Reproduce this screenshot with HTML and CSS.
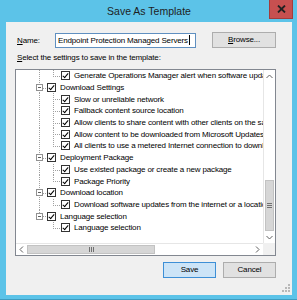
FILE: index.html
```html
<!DOCTYPE html>
<html lang="en">
<head>
    <meta charset="UTF-8">
    <title>Save As Template</title>
    <link rel="stylesheet" href="styles.css">
</head>
<body>
    <div class="window">
        <div class="titlebar">
            <span></span>
            <div class="title">Save As Template</div>
            <div class="close"><svg width="9" height="8" viewBox="0 0 9 8"><path d="M1 0.5 L8 7.5 M8 0.5 L1 7.5" stroke="#222" stroke-width="1.8"/></svg></div>
        </div>

        <div class="client">
            <div class="name-row">
                <label class="name-label"><u>N</u>ame:</label>
                <div class="textbox">Endpoint Protection Managed Servers<span class="caret"></span></div>
                <button class="btn browse"><u>B</u>rowse...</button>
            </div>

            <div class="hint"><u>S</u>elect the settings to save in the template:</div>

            <div class="treebox">
                <div class="tree">
                    <div class="row"><span class="g v"></span><span class="g ell"></span><span class="cb"></span><span class="lbl">Generate Operations Manager alert when software updates fail</span></div>
                    <div class="row"><span class="g exp-mid"><span class="exp"></span></span><span class="cb"></span><span class="lbl">Download Settings</span></div>
                    <div class="row"><span class="g v"></span><span class="g tee"></span><span class="cb"></span><span class="lbl">Slow or unreliable network</span></div>
                    <div class="row"><span class="g v"></span><span class="g tee"></span><span class="cb"></span><span class="lbl">Fallback content source location</span></div>
                    <div class="row"><span class="g v"></span><span class="g tee"></span><span class="cb"></span><span class="lbl">Allow clients to share content with other clients on the same subnet</span></div>
                    <div class="row"><span class="g v"></span><span class="g tee"></span><span class="cb"></span><span class="lbl">Allow content to be downloaded from Microsoft Updates</span></div>
                    <div class="row"><span class="g v"></span><span class="g ell"></span><span class="cb"></span><span class="lbl">All clients to use a metered Internet connection to download content</span></div>
                    <div class="row"><span class="g exp-mid"><span class="exp"></span></span><span class="cb"></span><span class="lbl">Deployment Package</span></div>
                    <div class="row"><span class="g v"></span><span class="g tee"></span><span class="cb"></span><span class="lbl">Use existed package or create a new package</span></div>
                    <div class="row"><span class="g v"></span><span class="g ell"></span><span class="cb"></span><span class="lbl">Package Priority</span></div>
                    <div class="row"><span class="g exp-mid"><span class="exp"></span></span><span class="cb"></span><span class="lbl">Download location</span></div>
                    <div class="row"><span class="g v"></span><span class="g ell"></span><span class="cb"></span><span class="lbl">Download software updates from the internet or a location on the network</span></div>
                    <div class="row"><span class="g exp-last"><span class="exp"></span></span><span class="cb"></span><span class="lbl">Language selection</span></div>
                    <div class="row"><span class="g"></span><span class="g ell"></span><span class="cb"></span><span class="lbl">Language selection</span></div>
                </div>

                <div class="vscroll">
                    <div class="arrow"><svg width="7" height="5" viewBox="0 0 7 5"><polyline points="0.5,4 3.5,1 6.5,4" fill="none" stroke="#606060"/></svg></div>
                    <div class="track"></div>
                    <div class="vthumb"><span class="grip-h"></span></div>
                    <div class="arrow"><svg width="7" height="5" viewBox="0 0 7 5"><polyline points="0.5,1 3.5,4 6.5,1" fill="none" stroke="#606060"/></svg></div>
                </div>

                <div class="hscroll">
                    <div class="arrow"><svg width="5" height="7" viewBox="0 0 5 7"><polyline points="4,0.5 1,3.5 4,6.5" fill="none" stroke="#606060"/></svg></div>
                    <div class="hthumb"><span class="grip-v"></span></div>
                    <div class="track"></div>
                    <div class="arrow"><svg width="5" height="7" viewBox="0 0 5 7"><polyline points="1,0.5 4,3.5 1,6.5" fill="none" stroke="#606060"/></svg></div>
                </div>

                <div class="corner"></div>
            </div>

            <div class="actions">
                <button class="btn save">Save</button>
                <button class="btn">Cancel</button>
            </div>

            <div class="sizegrip">
                <svg width="8" height="8" viewBox="0 0 8 8" fill="#b8b8b8">
                    <rect x="6" y="0" width="2" height="2"/>
                    <rect x="3" y="3" width="2" height="2"/><rect x="6" y="3" width="2" height="2"/>
                    <rect x="0" y="6" width="2" height="2"/><rect x="3" y="6" width="2" height="2"/><rect x="6" y="6" width="2" height="2"/>
                </svg>
            </div>
        </div>
    </div>
</body>
</html>
```

FILE: styles.css
```css
body {
    margin: 0;
    padding: 0;
    font-family: "Liberation Sans", Arial, sans-serif;
    background-color: #5cc3e8;
}
.window {
    width: 297px;
    height: 300px;
    box-sizing: border-box;
    background-color: #5cc3e8;
    border-bottom: 1px solid #3f9cc0;
    display: flex;
    flex-direction: column;
}
.titlebar {
    height: 22px;
    display: grid;
    grid-template-columns: 1fr auto 1fr;
    align-items: start;
}
.title {
    font-size: 10.5px;
    color: #1e1e1e;
    line-height: 22px;
    padding-left: 1px;
}
.close {
    justify-self: end;
    margin-right: 4px;
    width: 24px;
    height: 19px;
    box-sizing: border-box;
    background-color: #c75050;
    border: 1px solid #a33c3c;
    border-top: none;
    display: flex;
    align-items: center;
    justify-content: center;
}
.client {
    flex: 1;
    margin: 0 5px 4px 6px;
    background-color: #f0f0f0;
    padding: 10px 16px 0 9px;
    display: flex;
    flex-direction: column;
    font-size: 8px;
    letter-spacing: -0.15px;
    color: #000;
}
.name-row {
    display: flex;
    align-items: center;
    height: 16px;
}
.name-label {
    width: 38px;
    margin-left: 2px;
}
.textbox {
    width: 141px;
    height: 15px;
    box-sizing: border-box;
    background: #fff;
    border: 1px solid #5f8fc0;
    padding-left: 2px;
    line-height: 13px;
    white-space: nowrap;
}
.caret {
    display: inline-block;
    width: 1px;
    height: 10px;
    background: #000;
    vertical-align: -2px;
    margin-left: 1px;
}
.btn {
    font-family: inherit;
    font-size: 8px;
    letter-spacing: -0.15px;
    color: #000;
    background-color: #e1e1e1;
    border: 1px solid #adadad;
    height: 16px;
    width: 53px;
    padding: 0;
    line-height: 14px;
}
.browse {
    width: 64px;
    margin-left: auto;
}
.hint {
    margin: 5px 0 0 2px;
    height: 10px;
    line-height: 10px;
}
.treebox {
    margin-top: 6px;
    height: 187px;
    box-sizing: border-box;
    border: 1px solid #828790;
    background: #fff;
    display: grid;
    grid-template-columns: 1fr 12px;
    grid-template-rows: 1fr 12px;
    overflow: hidden;
}
.tree {
    overflow: hidden;
    padding-left: 17px;
    min-width: 0;
}
.row {
    display: flex;
    align-items: center;
    height: 11.7px;
    white-space: nowrap;
}
.g {
    flex: 0 0 14px;
    align-self: stretch;
    display: flex;
    align-items: center;
    justify-content: center;
    background-repeat: no-repeat;
}
/* dotted tree guide lines */
.v {
    background-image: repeating-linear-gradient(to bottom, #a0a0a0 0 1px, transparent 1px 2px);
    background-size: 1px 100%;
    background-position: 6px 0;
}
.tee {
    background-image:
        repeating-linear-gradient(to bottom, #a0a0a0 0 1px, transparent 1px 2px),
        repeating-linear-gradient(to right, #a0a0a0 0 1px, transparent 1px 2px);
    background-size: 1px 100%, 8px 1px;
    background-position: 6px 0, 6px 6px;
}
.ell {
    background-image:
        repeating-linear-gradient(to bottom, #a0a0a0 0 1px, transparent 1px 2px),
        repeating-linear-gradient(to right, #a0a0a0 0 1px, transparent 1px 2px);
    background-size: 1px 6px, 8px 1px;
    background-position: 6px 0, 6px 6px;
}
.exp-mid {
    background-image:
        repeating-linear-gradient(to bottom, #a0a0a0 0 1px, transparent 1px 2px),
        repeating-linear-gradient(to right, #a0a0a0 0 1px, transparent 1px 2px);
    background-size: 1px 100%, 8px 1px;
    background-position: 6px 0, 6px 6px;
}
.exp-last {
    background-image:
        repeating-linear-gradient(to bottom, #a0a0a0 0 1px, transparent 1px 2px),
        repeating-linear-gradient(to right, #a0a0a0 0 1px, transparent 1px 2px);
    background-size: 1px 6px, 8px 1px;
    background-position: 6px 0, 6px 6px;
}
.exp {
    width: 7px;
    height: 7px;
    box-sizing: border-box;
    border: 1px solid #919191;
    margin-left: -1px;
    background: linear-gradient(#fff, #fff) padding-box;
    background-image: linear-gradient(#606060, #606060);
    background-size: 3px 1px;
    background-position: center;
    background-repeat: no-repeat;
    background-color: #fff;
}
.cb {
    flex: 0 0 9px;
    height: 9px;
    box-sizing: border-box;
    border: 1px solid #333;
    background: #fff;
    display: flex;
    justify-content: center;
}
.cb::after {
    content: "";
    width: 2px;
    height: 5px;
    margin-top: 0;
    border: solid #000;
    border-width: 0 1.5px 1.5px 0;
    transform: rotate(40deg);
}
.lbl {
    margin-left: 4px;
}
.vscroll {
    display: flex;
    flex-direction: column;
    background: #fff;
    border-left: 1px solid #e6e6e6;
}
.hscroll {
    display: flex;
    background: #fff;
    border-top: 1px solid #e6e6e6;
}
.arrow {
    flex: 0 0 11px;
    display: flex;
    align-items: center;
    justify-content: center;
}
.vscroll .arrow {
    flex: 0 0 12px;
}
.track {
    flex: 1;
}
.vthumb {
    height: 49px;
    background: #d6d6d6;
    border: 1px solid #c2c2c2;
    margin: 0 1px;
    display: flex;
    align-items: center;
    justify-content: center;
}
.hthumb {
    flex: 0 0 126px;
    background: #d6d6d6;
    border: 1px solid #c2c2c2;
    margin: 1px 0;
    display: flex;
    align-items: center;
    justify-content: center;
}
.grip-h {
    width: 5px;
    height: 5px;
    background: repeating-linear-gradient(to bottom, #707070 0 1px, transparent 1px 2px);
}
.grip-v {
    width: 5px;
    height: 5px;
    background: repeating-linear-gradient(to right, #707070 0 1px, transparent 1px 2px);
}
.corner {
    background: #f0f0f0;
}
.actions {
    margin-top: 6px;
    display: flex;
    justify-content: flex-end;
    gap: 7px;
}
.save {
    background-color: #cce4f7;
    border-color: #3d8fd6;
}
.sizegrip {
    align-self: flex-end;
    margin: 6px -14px 0 0;
    height: 8px;
}
```
